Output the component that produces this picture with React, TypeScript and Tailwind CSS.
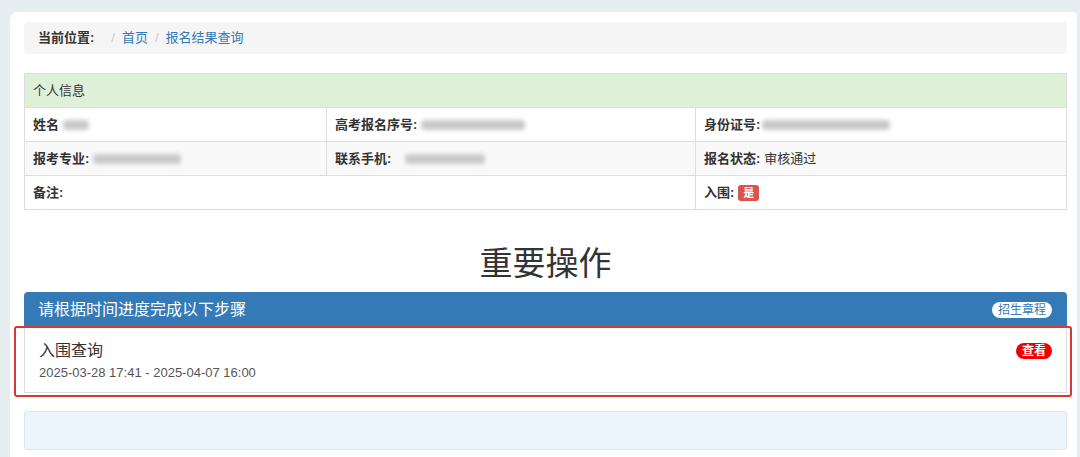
import React from 'react';

const font = { fontFamily: '"Liberation Sans", "Noto Sans CJK SC", sans-serif' };

const Blur: React.FC<{ w: string }> = ({ w }) => (
  <span className={`inline-block h-[10px] ${w} rounded-sm bg-[#c9c9c9] blur-[2px] align-middle`} />
);

const App: React.FC = () => {
  return (
    <div className="min-h-[457px] w-[1080px] bg-[#e7eef2] pt-[12px] pl-[10px] text-[#333]" style={font}>
      <div className="h-[445px] w-[1067px] rounded-tl-[8px] rounded-tr-[4px] bg-white pt-[10px] pr-[10px] pl-[14px]">
        {/* breadcrumb */}
        <div className="flex h-[32px] items-center rounded-[4px] bg-[#f5f5f5] px-[14px] text-[13px]">
          <span className="font-bold text-[#333]">当前位置:</span>
          <span className="ml-[17px] text-[#ccc]">/</span>
          <span className="ml-[7px] text-[#337ab7]">首页</span>
          <span className="ml-[7px] text-[#ccc]">/</span>
          <span className="ml-[7px] text-[#337ab7]">报名结果查询</span>
        </div>

        {/* info table */}
        <table className="mt-[19px] w-full border-collapse text-[13px]">
          <tbody>
            <tr className="h-[34px] bg-[#dff0d8]">
              <td colSpan={3} className="border border-[#ddd] px-[8px] text-[#333]">
                个人信息
              </td>
            </tr>
            <tr className="h-[34px] bg-white">
              <td className="w-[302px] border border-[#ddd] px-[8px]">
                <span className="font-bold">姓名</span>
                <span className="ml-[4px]">
                  <Blur w="w-[26px]" />
                </span>
              </td>
              <td className="w-[369px] border border-[#ddd] px-[8px]">
                <span className="font-bold">高考报名序号:</span>
                <span className="ml-[4px]">
                  <Blur w="w-[104px]" />
                </span>
              </td>
              <td className="border border-[#ddd] px-[8px]">
                <span className="font-bold">身份证号:</span>
                <span className="ml-[2px]">
                  <Blur w="w-[128px]" />
                </span>
              </td>
            </tr>
            <tr className="h-[34px] bg-[#f9f9f9]">
              <td className="border border-[#ddd] px-[8px]">
                <span className="font-bold">报考专业:</span>
                <span className="ml-[4px]">
                  <Blur w="w-[88px]" />
                </span>
              </td>
              <td className="border border-[#ddd] px-[8px]">
                <span className="font-bold">联系手机:</span>
                <span className="ml-[14px]">
                  <Blur w="w-[80px]" />
                </span>
              </td>
              <td className="border border-[#ddd] px-[8px]">
                <span className="font-bold">报名状态:</span>
                <span className="ml-[4px]">审核通过</span>
              </td>
            </tr>
            <tr className="h-[34px] bg-white">
              <td colSpan={2} className="border border-[#ddd] px-[8px]">
                <span className="font-bold">备注:</span>
              </td>
              <td className="border border-[#ddd] px-[8px]">
                <span className="font-bold">入围:</span>
                <span className="ml-[4px] inline-block rounded-[3px] bg-[#d9534f] px-[5px] py-[1px] text-[11px] font-bold leading-[14px] text-white">
                  是
                </span>
              </td>
            </tr>
          </tbody>
        </table>

        {/* heading */}
        <h1 className="mt-[34px] text-center text-[33px] leading-[40px] font-normal text-[#333]">重要操作</h1>

        {/* steps panel */}
        <div className="relative mt-[8px]">
          <div className="flex h-[36px] items-center justify-between rounded-t-[4px] bg-[#337ab7] pr-[15px] pl-[14px] text-white">
            <span className="text-[16px]">请根据时间进度完成以下步骤</span>
            <span className="rounded-full bg-white px-[6px] text-[12px] leading-[16px] text-[#337ab7]">招生章程</span>
          </div>
          <div className="flex h-[65px] justify-between border border-t-0 border-[#ddd] pt-[13px] pr-[14px] pl-[14px]">
            <div>
              <div className="text-[16px] leading-[20px] text-[#333]">入围查询</div>
              <div className="mt-[4px] text-[13px] leading-[16px] text-[#555]">2025-03-28 17:41 - 2025-04-07 16:00</div>
            </div>
            <span className="mt-[2px] h-[16px] rounded-full bg-[#e00] px-[6px] text-[12px] leading-[16px] font-bold text-white">
              查看
            </span>
          </div>
          <div className="pointer-events-none absolute top-[34px] -left-[10px] h-[71px] w-[1058px] rounded-[3px] border-2 border-[#dc3535]" />
        </div>

        {/* empty info box */}
        <div className="mt-[18px] h-[39px] rounded-[3px] border border-[#d6e6f2] bg-[#edf5fc]" />
      </div>
    </div>
  );
};

export default App;
